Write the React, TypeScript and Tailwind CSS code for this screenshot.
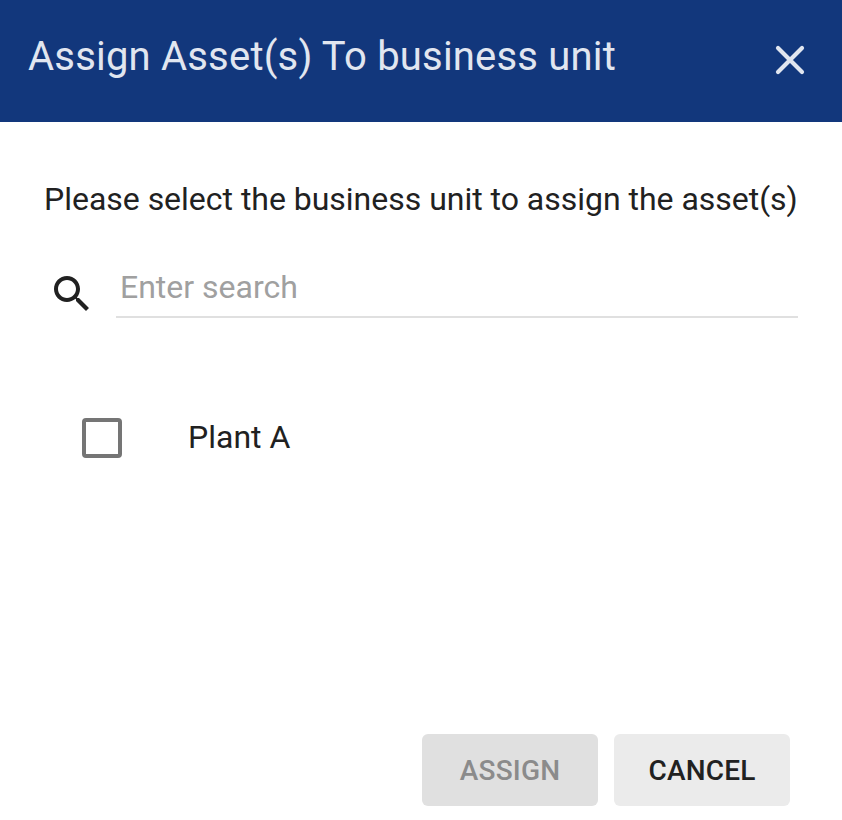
export default function App() {
  return (
    <div className="flex h-[820px] w-[842px] flex-col bg-white font-[Roboto,sans-serif] text-[#212121]">
      <header className="flex h-[122px] items-center justify-between bg-[#12377c] pr-[28px] pl-[28px]">
        <h1 className="-mt-[8px] text-[40px] leading-[48px] tracking-[0.2px] whitespace-nowrap text-[#e1e6f0]">Assign Asset(s) To business unit</h1>
        <svg className="-mt-[2px] h-[48px] w-[48px]" viewBox="0 0 24 24" fill="none" stroke="#e1e6f0" strokeWidth="2.1" strokeLinecap="round">
          <path d="M6 6 18 18M18 6 6 18" />
        </svg>
      </header>
      <main className="flex flex-1 flex-col px-[44px] pt-[54px]">
        <p className="text-[32px] leading-[46px] tracking-[-0.02px] whitespace-nowrap">Please select the business unit to assign the asset(s)</p>
        <div className="mt-[42px] flex h-[54px]">
          <svg className="mt-[6px] ml-[4px] h-[48px] w-[48px]" viewBox="0 0 24 24" fill="#212121">
            <path d="M15.5 14h-.79l-.28-.27C15.41 12.59 16 11.11 16 9.5 16 5.91 13.09 3 9.5 3S3 5.91 3 9.5 5.91 16 9.5 16c1.61 0 3.09-.59 4.23-1.57l.27.28v.79l5 4.99L20.49 19l-4.99-5zm-6 0C7.01 14 5 11.99 5 9.5S7.01 5 9.5 5 14 7.01 14 9.5 11.99 14 9.5 14z" />
          </svg>
          <input className="ml-[20px] w-[682px] border-b-2 border-[#e0e0e0] px-[4px] pb-[6px] text-[32px] outline-none placeholder:text-[#a0a0a0]" placeholder="Enter search" />
        </div>
        <label className="mt-[96px] ml-[38px] flex h-[48px] items-center text-[32px]">
          <span className="h-[40px] w-[40px] rounded-[4px] border-4 border-[#757575]" />
          <span className="-mt-[2px] ml-[66px]">Plant A</span>
        </label>
      </main>
      <footer className="flex justify-end gap-[16px] pr-[52px] pb-[14px] text-[28px] font-medium tracking-[0.2px]">
        <button className="h-[72px] w-[176px] rounded-[6px] bg-[#e0e0e0] pt-[2px] text-[#8b8b8b]">ASSIGN</button>
        <button className="h-[72px] w-[176px] rounded-[6px] bg-[#ebebeb] pt-[2px]">CANCEL</button>
      </footer>
    </div>
  );
}
